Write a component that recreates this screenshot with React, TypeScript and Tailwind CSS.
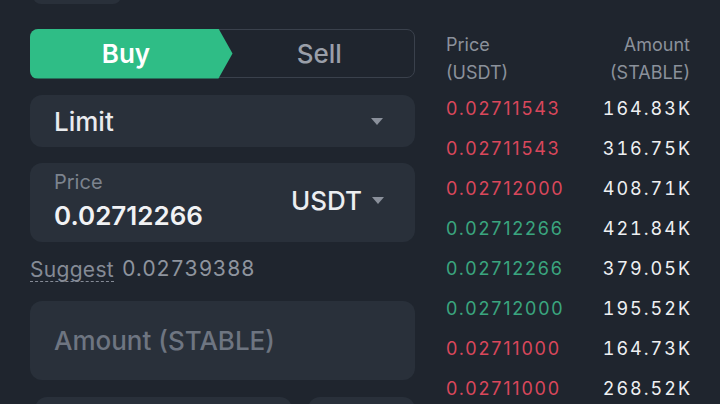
import React from "react";

type Row = { price: string; amount: string; side: "ask" | "bid" };

const rows: Row[] = [
  { price: "0.02711543", amount: "164.83K", side: "ask" },
  { price: "0.02711543", amount: "316.75K", side: "ask" },
  { price: "0.02712000", amount: "408.71K", side: "ask" },
  { price: "0.02712266", amount: "421.84K", side: "bid" },
  { price: "0.02712266", amount: "379.05K", side: "bid" },
  { price: "0.02712000", amount: "195.52K", side: "bid" },
  { price: "0.02711000", amount: "164.73K", side: "ask" },
  { price: "0.02711000", amount: "268.52K", side: "ask" },
];

const Caret = () => (
  <svg width="12" height="7" viewBox="0 0 12 7" className="shrink-0">
    <path d="M0 0h12L6 7z" fill="#8a909b" />
  </svg>
);

const App = () => {
  return (
    <section
      className="w-[720px] h-[404px] overflow-hidden bg-[#1f252e] flex gap-[31px] px-[30px]"
      style={{ fontFamily: "Inter, 'Noto Sans', sans-serif" }}
    >
      {/* order form */}
      <div className="w-[385px] flex flex-col shrink-0">
        <div className="shrink-0 h-[40px] mt-[-36px] ml-[3px] w-[88px] rounded-lg bg-[#29303a]"></div>

        <div className="shrink-0 mt-[25px] h-[49px] rounded-lg border-[1.5px] border-[#3a414c] flex">
          <div className="w-[203px] -ml-[1.5px] -my-[1.5px] rounded-l-lg bg-[#2fbd86] flex items-center justify-center [clip-path:polygon(0_0,calc(100%_-_14px)_0,100%_50%,calc(100%_-_14px)_100%,0_100%)]">
            <span className="text-[26px] font-semibold text-white pr-[10px]">Buy</span>
          </div>
          <div className="flex-1 flex items-center justify-center">
            <span className="text-[26px] font-medium text-[#9a9fa9] mr-[8px]">Sell</span>
          </div>
        </div>

        <div className="shrink-0 mt-[17px] h-[52px] rounded-xl bg-[#29303a] flex items-center justify-between pl-[24px] pr-[32px]">
          <span className="text-[26px] font-medium text-[#e9ebee] mt-[1px]">Limit</span>
          <Caret />
        </div>

        <div className="shrink-0 mt-[16px] h-[79px] rounded-xl bg-[#29303a] flex items-center justify-between pl-[24px] pr-[31px]">
          <div className="flex flex-col gap-[8px] mt-[-3px]">
            <span className="text-[20px] leading-[22px] text-[#7c838e]">Price</span>
            <span className="text-[26px] leading-[30px] font-semibold text-[#f1f2f4]">0.02712266</span>
          </div>
          <div className="flex items-center gap-[10px] mt-[-4px]">
            <span className="text-[26px] font-medium text-[#eceef1]">USDT</span>
            <Caret />
          </div>
        </div>

        <div className="shrink-0 mt-[15px] h-[24px] flex items-center gap-[8px] text-[21px]">
          <span className="text-[#858b96] border-b border-dashed border-[#858b96] leading-[23px] pt-[1px] tracking-[0.3px]">Suggest</span>
          <span className="text-[#8e949e] tabular-nums tracking-[0.5px]">0.02739388</span>
        </div>

        <div className="shrink-0 mt-[20px] h-[79px] rounded-xl bg-[#29303a] flex items-center pl-[24px]">
          <span className="text-[26px] font-medium text-[#6e7581]">Amount (STABLE)</span>
        </div>

        <div className="shrink-0 mt-[17px] flex gap-[16px] pl-[5px]">
          <div className="w-[257px] h-[40px] rounded-xl bg-[#29303a]"></div>
          <div className="flex-1 h-[40px] rounded-xl bg-[#29303a]"></div>
        </div>
      </div>

      {/* order book */}
      <div className="w-[244px] flex flex-col pt-[31px] text-[18px]">
        <div className="shrink-0 flex justify-between leading-[28px] text-[#8b919b] mb-[1px]">
          <div className="flex flex-col">
            <span>Price</span>
            <span>(USDT)</span>
          </div>
          <div className="flex flex-col items-end">
            <span>Amount</span>
            <span>(STABLE)</span>
          </div>
        </div>
        {rows.map((r, i) => (
          <div key={i} className="shrink-0 flex justify-between h-[40px] items-center">
            <span className={`tracking-[1.8px] ${r.side === "ask" ? "text-[#d9475b]" : "text-[#3aa57f]"}`}>{r.price}</span>
            <span className="text-[#eef0f2] tabular-nums tracking-[2px] mr-[-2px]">{r.amount}</span>
          </div>
        ))}
      </div>
    </section>
  );
};

export default App;
